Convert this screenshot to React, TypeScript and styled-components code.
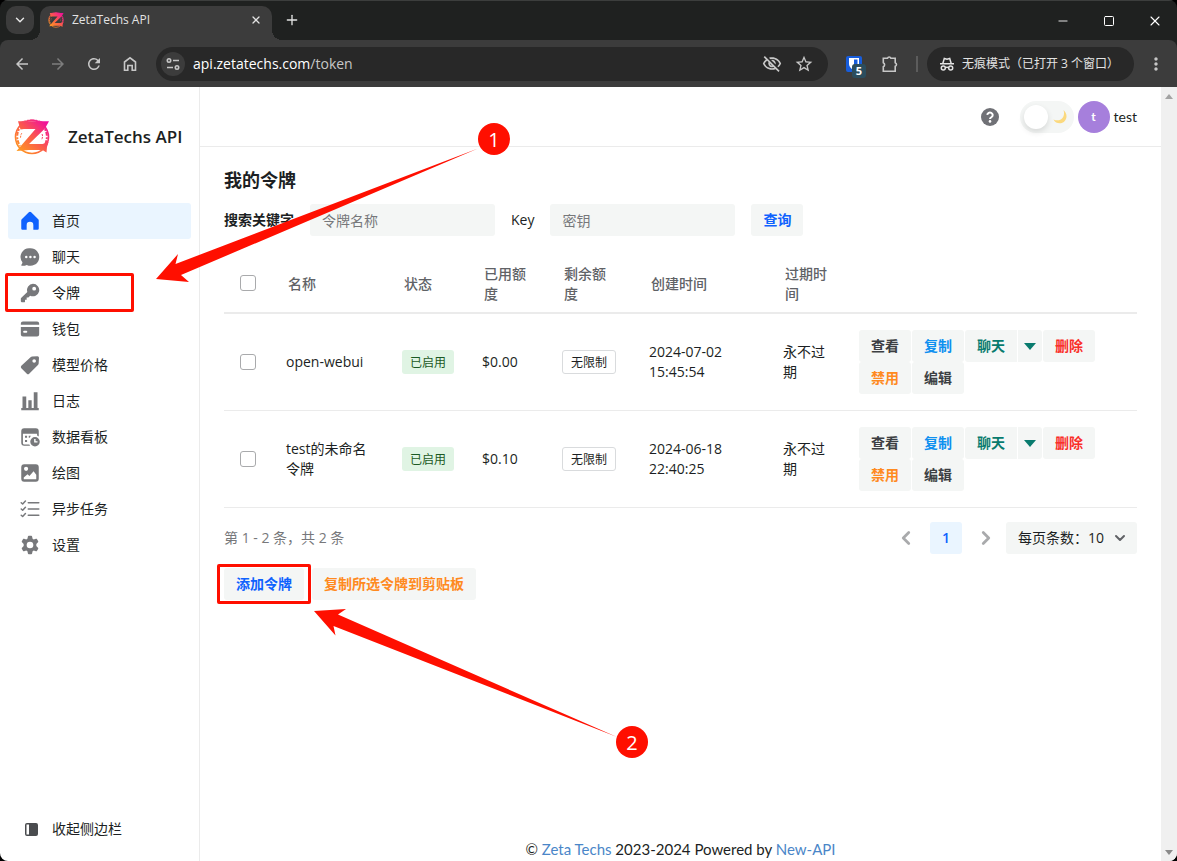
import React from "react";
import styled, { createGlobalStyle } from "styled-components";
import {
  MdArrowBack,
  MdArrowForward,
  MdRefresh,
  MdOutlineVisibilityOff,
  MdStarOutline,
  MdMoreVert,
} from "react-icons/md";
import { ChevronDown, ChevronLeft, ChevronRight, Plus, X, Minus, Square } from "lucide-react";

const GlobalStyle = createGlobalStyle`
  *, *::before, *::after { box-sizing: border-box; }
  html { background: #000; }
  body {
    margin: 0;
    background: #000;
    color: #1c1f23;
    font: 14px/20px "Open Sans", "Noto Sans CJK SC", sans-serif;
  }
  button, input, select { font: inherit; color: inherit; }
  button { border: 0; padding: 0; background: none; cursor: pointer; }
  a { text-decoration: none; color: inherit; }
  svg { display: block; flex: none; }
`;

/* ---------- browser frame ---------- */

const Window = styled.div`
  position: relative;
  display: flex;
  flex-direction: column;
  min-height: 100vh;
  border-radius: 8px;
  overflow: hidden;
  background: #1f2120;
`;

const TitleBar = styled.div`
  display: flex;
  align-items: flex-end;
  height: 40px;
  padding-left: 6px;
  border-top: 1px solid #3c3e3d;
  color: #e3e3e3;
`;

const TabListButton = styled.button`
  display: grid;
  place-items: center;
  width: 28px;
  height: 28px;
  margin: 0 6px 6px 0;
  border-radius: 10px;
  background: #3c3c3c;
`;

const Tab = styled.div`
  position: relative;
  display: flex;
  align-items: center;
  gap: 8px;
  width: 232px;
  height: 34px;
  padding: 0 8px 6px;
  border-radius: 10px 10px 0 0;
  background: #3c3c3c;
  font-size: 12px;
  &::before, &::after {
    content: "";
    position: absolute;
    bottom: 0;
    width: 10px;
    height: 10px;
  }
  &::before { left: -10px; background: radial-gradient(circle at 0 0, transparent 10px, #3c3c3c 10px); }
  &::after { right: -10px; background: radial-gradient(circle at 100% 0, transparent 10px, #3c3c3c 10px); }
`;

const TabTitle = styled.span`
  flex: 1;
`;

const TabClose = styled.button`
  display: grid;
  place-items: center;
  width: 16px;
  height: 16px;
`;

const NewTab = styled.button`
  display: grid;
  place-items: center;
  width: 28px;
  height: 28px;
  margin: 0 0 6px 6px;
`;

const WindowButtons = styled.div`
  display: flex;
  align-self: stretch;
  margin-left: auto;
`;

const WindowButton = styled.button`
  display: grid;
  place-items: center;
  width: 46px;
  color: #fff;
  &:last-child { width: 45px; }
`;

const Toolbar = styled.div`
  display: flex;
  align-items: center;
  height: 47px;
  padding: 0 3px 0 4px;
  border-radius: 8px 8px 0 0;
  background: #3c3c3c;
  color: #c7c7c7;
`;

const ToolButton = styled.button<{ $dim?: boolean }>`
  position: relative;
  display: grid;
  place-items: center;
  width: 36px;
  height: 34px;
  color: ${(p) => (p.$dim ? "#7d7d7d" : "#c7c7c7")};
`;

const AddressBar = styled.div`
  display: flex;
  align-items: center;
  flex: 1;
  height: 34px;
  margin: 0 8px;
  padding: 0 8px 0 5px;
  border-radius: 17px;
  background: #282828;
`;

const SiteInfo = styled.button`
  display: grid;
  place-items: center;
  width: 24px;
  height: 24px;
  margin-right: 8px;
  border-radius: 12px;
  background: #3c3c3c;
`;

const Address = styled.span`
  flex: 1;
  color: #fff;
  span { color: #c7c7c7; }
`;

const AddressButton = styled.button`
  display: grid;
  place-items: center;
  width: 32px;
  height: 32px;
`;

const ExtensionBadge = styled.span`
  position: absolute;
  right: 6px;
  bottom: 3px;
  width: 14px;
  height: 14px;
  border-radius: 3px;
  background: #2b4d5e;
  color: #fff;
  font-size: 11px;
  font-weight: 700;
  line-height: 14px;
  text-align: center;
`;

const Separator = styled.span`
  width: 2px;
  height: 16px;
  margin: 0 9px 0 8px;
  background: #5c5c5c;
`;

const Incognito = styled.button`
  display: flex;
  align-items: center;
  gap: 7px;
  height: 34px;
  margin-right: 4px;
  padding: 0 15px 0 12px;
  border-radius: 17px;
  background: #282828;
  color: #e3e3e3;
  font-size: 12px;
`;

/* ---------- page ---------- */

const Page = styled.div`
  display: flex;
  flex: 1;
  background: #fff;
`;

const Sidebar = styled.aside`
  display: flex;
  flex-direction: column;
  width: 200px;
  padding: 0 8px 14px;
  border-right: 1px solid #ebebeb;
`;

const Brand = styled.a`
  display: flex;
  align-items: center;
  gap: 18px;
  height: 100px;
  margin-bottom: 16px;
  padding-left: 6px;
  font-size: 17px;
  line-height: 24px;
  font-weight: 600;
`;

const NavItem = styled.a<{ $active?: boolean; $bottom?: boolean }>`
  position: relative;
  display: flex;
  align-items: center;
  gap: 12px;
  height: 36px;
  padding-left: 12px;
  border-radius: 3px;
  background: ${(p) => (p.$active ? "#eaf5ff" : "transparent")};
  margin-top: ${(p) => (p.$bottom ? "auto" : "0")};
  color: #1c1f23;
  svg { color: ${(p) => (p.$active ? "#0f62fe" : p.$bottom ? "#4a4c4f" : "#77787b")}; }
`;

const Highlight = styled.span<{ $shape: "nav" | "button" }>`
  position: absolute;
  ${(p) => (p.$shape === "nav" ? "inset: -2px 57px -1px -3px;" : "inset: -4px -7px;")}
  border: 3px solid #ff0f00;
  border-radius: 2px;
  pointer-events: none;
`;

const Main = styled.main`
  display: flex;
  flex: 1;
  flex-direction: column;
  min-width: 0;
`;

const Header = styled.header`
  display: flex;
  align-items: center;
  justify-content: flex-end;
  height: 60px;
  padding-right: 24px;
  border-bottom: 1px solid #ebebeb;
`;

const HelpButton = styled.button`
  margin-right: 20px;
  color: #707176;
`;

const ThemeSwitch = styled.label`
  position: relative;
  display: flex;
  align-items: center;
  width: 54px;
  height: 32px;
  margin-right: 4px;
  border-radius: 16px;
  background: #f4f6f5;
  input {
    appearance: none;
    width: 24px;
    height: 24px;
    margin: 0 0 0 4px;
    border-radius: 12px;
    background: #fff;
    box-shadow: 0 3px 6px rgba(0, 0, 0, 0.12);
  }
  svg { margin-left: 4px; }
`;

const Avatar = styled.span`
  width: 32px;
  height: 32px;
  margin-right: 4px;
  border-radius: 16px;
  background: #a67fdc;
  color: #fff;
  font: 700 12px/32px Lato, sans-serif;
  text-align: center;
`;

const UserName = styled.span`
  font: 14px/20px Lato, sans-serif;
`;

const Content = styled.div`
  flex: 1;
  padding: 21px 24px 0;
`;

const Title = styled.h3`
  margin: 0 0 12px;
  font-size: 18px;
  line-height: 24px;
  font-weight: 700;
`;

const SearchForm = styled.form`
  display: flex;
  align-items: center;
  gap: 16px;
`;

const FieldLabel = styled.label<{ $latin?: boolean }>`
  font-weight: ${(p) => (p.$latin ? 500 : 600)};
`;

const TextInput = styled.input`
  width: 185px;
  height: 32px;
  padding: 0 12px;
  border: 0;
  border-radius: 3px;
  background: #f4f6f5;
  &::placeholder { color: #77787b; opacity: 1; }
`;

const Button = styled.button<{ $color: string; $narrow?: boolean }>`
  position: relative;
  display: inline-flex;
  align-items: center;
  justify-content: center;
  height: 32px;
  padding: 0 ${(p) => (p.$narrow ? "6px" : "12px")};
  border-radius: 3px;
  background: #f4f6f5;
  color: ${(p) => p.$color};
  font-weight: 600;
  white-space: nowrap;
`;

const Table = styled.table`
  width: 100%;
  margin-top: 18px;
  border-collapse: separate;
  border-spacing: 0;
  table-layout: fixed;
  th {
    padding: 10px 16px 8px 18px;
    border-bottom: 2px solid #ebebeb;
    color: #606266;
    font-weight: 500;
    text-align: left;
  }
  td {
    padding: 16px;
    border-bottom: 1px solid #ebebeb;
  }
  th:first-child, td:first-child { padding: 0 0 0 16px; }
`;

const Col = styled.col<{ $w?: number }>`
  width: ${(p) => (p.$w ? `${p.$w}px` : "auto")};
`;

const Checkbox = styled.input`
  display: block;
  appearance: none;
  width: 16px;
  height: 16px;
  margin: 0;
  border: 1px solid #a9aaac;
  border-radius: 3px;
  background: #fff;
`;

const Tag = styled.span<{ $tone: "green" | "plain" }>`
  display: inline-block;
  height: 24px;
  padding: 0 8px;
  border: solid ${(p) => (p.$tone === "green" ? "#e0f4e4" : "#d9dbdd")};
  border-width: ${(p) => (p.$tone === "green" ? "0" : "1px")};
  border-radius: 3px;
  background: ${(p) => (p.$tone === "green" ? "#e0f4e4" : "#fff")};
  color: ${(p) => (p.$tone === "green" ? "#1b5924" : "#1c1f23")};
  font-size: 12px;
  line-height: ${(p) => (p.$tone === "green" ? "26px" : "24px")};
  white-space: nowrap;
  vertical-align: middle;
`;

const Actions = styled.div`
  display: flex;
  flex-wrap: wrap;
  column-gap: 1px;
`;

const SplitButton = styled.div`
  display: flex;
  gap: 1px;
  button:first-child { border-radius: 3px 0 0 3px; }
  button:last-child { border-radius: 0 3px 3px 0; }
`;

const Pagination = styled.div`
  display: flex;
  align-items: center;
  margin: 14px 0;
  color: #77787b;
`;

const Pager = styled.nav`
  display: flex;
  align-items: center;
  gap: 8px;
  margin-left: auto;
`;

const PageButton = styled.button<{ $current?: boolean }>`
  display: grid;
  place-items: center;
  width: 32px;
  height: 32px;
  border-radius: 3px;
  background: ${(p) => (p.$current ? "#eaf5ff" : "transparent")};
  color: ${(p) => (p.$current ? "#0f62fe" : "#a9aaac")};
  font-weight: 600;
`;

const PageSize = styled.label`
  position: relative;
  margin-left: -4px;
  color: #1c1f23;
  select {
    display: block;
    appearance: none;
    width: 131px;
    height: 32px;
    padding: 0 12px;
    border: 0;
    border-radius: 3px;
    background: #f4f6f5;
  }
  svg {
    position: absolute;
    top: 8px;
    right: 9px;
    color: #606266;
    pointer-events: none;
  }
`;

const BatchActions = styled.div`
  display: flex;
  gap: 8px;
`;

const Footer = styled.footer`
  font: 15px/24px Lato, sans-serif;
  text-align: center;
  a { color: #4a86c8; }
`;

const ScrollTrack = styled.div`
  display: flex;
  flex-direction: column;
  align-items: center;
  justify-content: space-between;
  width: 16px;
  padding: 7px 0 6px;
  background: #f0f0f0;
`;

const ArrowLayer = styled.svg`
  position: absolute;
  top: 0;
  left: 0;
  fill: #ff0f00;
  pointer-events: none;
`;

const StepBadge = styled.span<{ $x: number; $y: number }>`
  position: absolute;
  left: ${(p) => p.$x}px;
  top: ${(p) => p.$y}px;
  width: 32px;
  height: 32px;
  border-radius: 16px;
  background: #ff0f00;
  color: #fff;
  font-size: 20px;
  line-height: 34px;
  text-align: center;
`;

/* ---------- drawings ---------- */

const Logo = ({ size, id }: { size: number; id: string }) => (
  <svg width={size} height={size} viewBox="0 0 36 36" fill="none" aria-hidden="true">
    <defs>
      <linearGradient id={id} x1="4" y1="32" x2="32" y2="3" gradientUnits="userSpaceOnUse">
        <stop offset="0" stopColor="#ff9a1f" />
        <stop offset="0.5" stopColor="#fb5a4b" />
        <stop offset="1" stopColor="#f0109c" />
      </linearGradient>
    </defs>
    <g stroke={`url(#${id})`}>
      <circle cx="18" cy="18" r="16.500" strokeWidth="1.600" />
      <path d="M7 3.500c7-3.500 15-3.500 22 0" strokeWidth="1" strokeDasharray="5 1 2 1" />
      <path d="M5 10c-3 6-2 12 1 17M31 10c3 6 2 11 0 16" strokeWidth="2" strokeDasharray="2 1 4 1.500" />
      <path d="M8 14c-1 1-1.500 3-1.500 5M28 15c1 2 .5 4-.5 6" strokeWidth="1" strokeDasharray="2 1" />
    </g>
    <path
      fill={`url(#${id})`}
      d="M4 2.300h31L31 9.500 15 25h13.500l6-2-1.500 5-.5 5.500-4-2.500H15L2.500 32 21.500 10H10l-3.500.500z"
    />
  </svg>
);

const NavIcon = ({ children }: { children: React.ReactNode }) => (
  <svg width="20" height="20" viewBox="0 0 24 24" fill="currentColor" aria-hidden="true">
    {children}
  </svg>
);

const line = { fill: "none", stroke: "currentColor", strokeLinecap: "round" as const, strokeLinejoin: "round" as const };

const HomeIcon = () => (
  <NavIcon>
    <path d="M10.600 1.600a2 2 0 0 1 2.800 0l8.500 8.300c.4.4.6.8.6 1.400V21a1.500 1.500 0 0 1-1.500 1.500h-5V17a4 4 0 0 0-8 0v5.500H3A1.500 1.500 0 0 1 1.500 21v-9.700c0-.6.200-1 .6-1.400z" />
  </NavIcon>
);
const ChatIcon = () => (
  <NavIcon>
    <path fillRule="evenodd" d="M12.500 1.500a10.500 10.500 0 1 1-4.400 20c-1.700.8-4 1.300-6 1-.6-.1-.8-.8-.4-1.200.9-1 1.200-2 1.200-3A10.500 10.500 0 0 1 12.500 1.500zM7.500 10.500a1.500 1.500 0 1 0 0 3 1.500 1.500 0 0 0 0-3zm5 0a1.500 1.500 0 1 0 0 3 1.500 1.500 0 0 0 0-3zm5 0a1.500 1.500 0 1 0 0 3 1.500 1.500 0 0 0 0-3z" />
  </NavIcon>
);
const KeyIcon = () => (
  <NavIcon>
    <path fillRule="evenodd" d="M15.500 1a7.500 7.500 0 1 1-3.300 14.200L10 17.500H8V20H6v2.500c0 .3-.2.500-.500.500H2a1 1 0 0 1-1-1v-3.200c0-.3.1-.5.3-.7l7.500-7.300A7.500 7.500 0 0 1 15.500 1zM17 4.500a2.300 2.300 0 1 0 0 4.600 2.300 2.300 0 0 0 0-4.600z" />
  </NavIcon>
);
const CardIcon = () => (
  <NavIcon>
    <path d="M3.500 3h17A2.500 2.500 0 0 1 23 5.500V7H1V5.500A2.500 2.500 0 0 1 3.500 3z" />
    <path fillRule="evenodd" d="M1 9.500h22v9a2.500 2.500 0 0 1-2.500 2.500h-17A2.500 2.500 0 0 1 1 18.500zM5 14a1 1 0 0 0 0 2.500h2.500a1 1 0 0 0 0-2.500z" />
  </NavIcon>
);
const TagIcon = () => (
  <NavIcon>
    <path fillRule="evenodd" d="M13 2.500c.4-.4.900-.6 1.500-.700L21 1.500A1.800 1.800 0 0 1 22.800 3.300l-.4 7c0 .5-.3 1-.6 1.400L11 22.400a2 2 0 0 1-2.800 0L1.600 15.800a2 2 0 0 1 0-2.800zM17 5a2.200 2.200 0 1 0 0 4.400A2.200 2.200 0 0 0 17 5z" />
  </NavIcon>
);
const ChartIcon = () => (
  <NavIcon>
    <path d="M1.500 20.500h21V23h-21zM3 6.500h4.500v15H3zM10 11h4v10.500h-4zM16.500 1.500H21v20h-4.500z" />
  </NavIcon>
);
const BoardIcon = () => (
  <NavIcon>
    <path fillRule="evenodd" d="M5 1.500h14A3.500 3.500 0 0 1 22.500 5v6.500a7 7 0 0 0-2-1.200V8h-17v11.500c0 .8.700 1.500 1.500 1.500h6.200c.3.600.7 1.100 1.100 1.500H5A3.500 3.500 0 0 1 1.500 19V5A3.500 3.500 0 0 1 5 1.500z" />
    <path d="M6 10.500h2.500V13H6zM10.500 10.500H13l-1.300 2.500h-1.200zM6 15.500h2.500V18H6z" />
    <path fillRule="evenodd" d="M18 12a5.700 5.700 0 1 1 0 11.400A5.700 5.700 0 0 1 18 12zm-1 2.500v4h4V17h-2.300v-2.500z" />
  </NavIcon>
);
const ImageIcon = () => (
  <NavIcon>
    <path fillRule="evenodd" d="M5 1.500h14A3.500 3.500 0 0 1 22.500 5v14a3.500 3.500 0 0 1-3.500 3.500H5A3.500 3.500 0 0 1 1.500 19V5A3.500 3.500 0 0 1 5 1.500zM7.300 4.500a2.500 2.500 0 1 0 0 5 2.500 2.500 0 0 0 0-5zM4.500 19.500h15v-5.300l-3.200-4.200-5 5.500-2.300-2-4.500 4z" />
  </NavIcon>
);
const ListIcon = () => (
  <NavIcon>
    <path {...line} strokeWidth="1.800" d="M1.500 4.500 3.200 6 6.500 2.500M1.500 12l1.700 1.500L6.500 10M1.500 19.500 3.200 21l3.300-3.500" />
    <path {...line} strokeWidth="2" d="M10 4.500h12.500M10 12h12.500M10 19.500h12.500" />
  </NavIcon>
);
const GearIcon = () => (
  <NavIcon>
    <path fillRule="evenodd" d="M9.500 1.800C9.600 1.300 10 1 10.500 1h3c.5 0 .9.300 1 .8l.6 2.700 1.400.8 2.600-.9c.5-.1 1 .1 1.200.5l1.500 2.600c.3.500.2 1-.2 1.300L19.600 10.700v2.600l2 1.900c.4.300.5.800.2 1.300l-1.500 2.600c-.2.400-.7.600-1.200.5l-2.600-.9-1.400.8-.6 2.700c-.1.500-.5.800-1 .8h-3c-.5 0-.9-.3-1-.8l-.6-2.700-1.400-.8-2.600.9c-.5.100-1-.1-1.200-.5l-1.500-2.600c-.3-.5-.2-1 .2-1.300l2-1.900v-2.600l-2-1.900c-.4-.3-.5-.8-.2-1.300l1.500-2.600c.2-.4.700-.6 1.200-.5l2.600.9 1.400-.8zM12 8a4 4 0 1 0 0 8 4 4 0 0 0 0-8z" />
  </NavIcon>
);
const CollapseIcon = () => (
  <svg width="20" height="20" viewBox="0 0 20 20" fill="currentColor" aria-hidden="true">
    <path fillRule="evenodd" d="M7 4h9a2 2 0 0 1 2 2v9a2 2 0 0 1-2 2H7a2 2 0 0 1-2-2V6a2 2 0 0 1 2-2zm-.500 1.500v10H9v-10z" />
  </svg>
);

const navItems = [
  { label: "首页", icon: <HomeIcon />, active: true },
  { label: "聊天", icon: <ChatIcon /> },
  { label: "令牌", icon: <KeyIcon />, marked: true },
  { label: "钱包", icon: <CardIcon /> },
  { label: "模型价格", icon: <TagIcon /> },
  { label: "日志", icon: <ChartIcon /> },
  { label: "数据看板", icon: <BoardIcon /> },
  { label: "绘图", icon: <ImageIcon /> },
  { label: "异步任务", icon: <ListIcon /> },
  { label: "设置", icon: <GearIcon /> },
];

const tokens = [
  { name: "open-webui", used: "$0.00", created: "2024-07-02 15:45:54" },
  { name: "test的未命名令牌", used: "$0.10", created: "2024-06-18 22:40:25" },
];

const BrowserFrame = () => (
  <>
    <TitleBar>
      <TabListButton aria-label="搜索标签页"><ChevronDown size={14} strokeWidth={2.5} /></TabListButton>
      <Tab>
        <Logo size={16} id="favicon" />
        <TabTitle>ZetaTechs API</TabTitle>
        <TabClose aria-label="关闭标签页"><X size={12} strokeWidth={2.5} /></TabClose>
      </Tab>
      <NewTab aria-label="新标签页"><Plus size={16} strokeWidth={2} /></NewTab>
      <WindowButtons>
        <WindowButton aria-label="最小化"><Minus size={14} strokeWidth={1.5} /></WindowButton>
        <WindowButton aria-label="最大化"><Square size={12} strokeWidth={2} /></WindowButton>
        <WindowButton aria-label="关闭"><X size={16} strokeWidth={1.6} /></WindowButton>
      </WindowButtons>
    </TitleBar>
    <Toolbar>
      <ToolButton aria-label="后退"><MdArrowBack size={18} /></ToolButton>
      <ToolButton $dim aria-label="前进"><MdArrowForward size={18} /></ToolButton>
      <ToolButton aria-label="重新加载"><MdRefresh size={18} /></ToolButton>
      <ToolButton aria-label="主页">
        <svg width="18" height="18" viewBox="0 0 18 18" fill="none" stroke="currentColor" strokeWidth="1.600">
          <path d="M3.500 15.200V7L9 2.800 14.500 7v8.200h-3.300v-4.700H6.800v4.700z" />
        </svg>
      </ToolButton>
      <AddressBar>
        <SiteInfo aria-label="网站信息">
          <svg width="14" height="14" viewBox="0 0 14 14" fill="none" stroke="currentColor" strokeWidth="1.600">
            <circle cx="3" cy="3.500" r="1.700" />
            <path d="M7 3.500h6M1 10.500h6" />
            <circle cx="11" cy="10.500" r="1.700" />
          </svg>
        </SiteInfo>
        <Address>api.zetatechs.com<span>/token</span></Address>
        <AddressButton aria-label="第三方 Cookie 已阻止"><MdOutlineVisibilityOff size={20} /></AddressButton>
        <AddressButton aria-label="添加书签"><MdStarOutline size={20} /></AddressButton>
      </AddressBar>
      <ToolButton aria-label="Bitwarden">
        <svg width="16" height="16" viewBox="0 0 16 16">
          <rect width="16" height="16" rx="2" fill="#175ddc" />
          <path d="M3 2h10v6c0 3-2.500 5-5 6.200C5.500 13 3 11 3 8z" fill="#fff" />
          <path d="M8 3.500h3.500V8c0 2-1.500 3.300-3.500 4.500z" fill="#175ddc" />
        </svg>
        <ExtensionBadge>5</ExtensionBadge>
      </ToolButton>
      <ToolButton aria-label="扩展程序">
        <svg width="20" height="20" viewBox="0 0 20 20" fill="none" stroke="currentColor" strokeWidth="1.600">
          <path d="M3.300 4.200h4.200a1.800 1.800 0 0 1 3.400 0h4.300v4.500a1.900 1.900 0 0 1 0 3.600v4.900H3.300v-4.500a2.200 2.200 0 0 0 0-4z" />
        </svg>
      </ToolButton>
      <Separator />
      <Incognito>
        <svg width="16" height="16" viewBox="0 0 16 16" fill="none" stroke="currentColor" strokeWidth="1.500">
          <path d="M1 7.800h14M3.800 7.500l1.500-5 2.700.8 2.700-.8 1.500 5" />
          <circle cx="4.300" cy="12" r="2" />
          <circle cx="11.700" cy="12" r="2" />
          <path d="M6.300 11.600q1.700-.8 3.400 0" />
        </svg>
        {"无痕模式\uFF08已打开 3 个窗口\uFF09"}
      </Incognito>
      <ToolButton aria-label="菜单"><MdMoreVert size={20} /></ToolButton>
    </Toolbar>
  </>
);

const TokenActions = () => (
  <Actions>
    <Button $color="#3c3f43">查看</Button>
    <Button $color="#0f90f0">复制</Button>
    <SplitButton>
      <Button $color="#087b6e">聊天</Button>
      <Button $color="#087b6e" $narrow aria-label="更多聊天应用">
        <svg width="12" height="7" viewBox="0 0 12 7" fill="currentColor"><path d="M0 0h12L6 7z" /></svg>
      </Button>
    </SplitButton>
    <Button $color="#fa2f2a">删除</Button>
    <Button $color="#ff8a1f">禁用</Button>
    <Button $color="#3c3f43">编辑</Button>
  </Actions>
);

export default function App() {
  return (
    <>
      <GlobalStyle />
      <Window>
        <BrowserFrame />
        <Page>
          <Sidebar>
            <Brand href="#">
              <Logo size={36} id="brand" />
              ZetaTechs API
            </Brand>
            {navItems.map((item) => (
              <NavItem key={item.label} href="#" $active={item.active}>
                {item.icon}
                {item.label}
                {item.marked && <Highlight $shape="nav" />}
              </NavItem>
            ))}
            <NavItem as="button" $bottom>
              <CollapseIcon />
              收起侧边栏
            </NavItem>
          </Sidebar>
          <Main>
            <Header>
              <HelpButton aria-label="帮助">
                <svg width="20" height="20" viewBox="0 0 20 20">
                  <circle cx="10" cy="10" r="9" fill="currentColor" />
                  <path d="M7.300 7.900a2.700 2.500 0 1 1 4.300 2.100c-1 .7-1.600 1-1.600 2" fill="none" stroke="#fff" strokeWidth="2" />
                  <circle cx="10" cy="14.400" r="1.300" fill="#fff" />
                </svg>
              </HelpButton>
              <ThemeSwitch>
                <input type="checkbox" role="switch" aria-label="深色模式" />
                <svg width="16" height="16" viewBox="0 0 16 16">
                  <path d="M11.500 1c4 3.500 4 9 .3 12C8.500 15.500 3.500 14.500 1.500 10.500c3.500 1.500 7 1 9-1.500 1.700-2.200 2-5 1-8z" fill="#fbd97e" />
                </svg>
              </ThemeSwitch>
              <Avatar>t</Avatar>
              <UserName>test</UserName>
            </Header>
            <Content>
              <Title>我的令牌</Title>
              <SearchForm onSubmit={(e) => e.preventDefault()}>
                <FieldLabel htmlFor="keyword">搜索关键字</FieldLabel>
                <TextInput id="keyword" placeholder="令牌名称" />
                <FieldLabel $latin htmlFor="key">Key</FieldLabel>
                <TextInput id="key" placeholder="密钥" />
                <Button type="submit" $color="#0f62fe">查询</Button>
              </SearchForm>
              <Table>
                <colgroup>
                  <Col $w={46} />
                  <Col $w={116} />
                  <Col $w={80} />
                  <Col $w={80} />
                  <Col $w={87} />
                  <Col $w={134} />
                  <Col $w={76} />
                  <Col />
                </colgroup>
                <thead>
                  <tr>
                    <th><Checkbox type="checkbox" aria-label="全选" /></th>
                    <th>名称</th>
                    <th>状态</th>
                    <th>已用额度</th>
                    <th>剩余额度</th>
                    <th>创建时间</th>
                    <th>过期时间</th>
                    <th aria-label="操作" />
                  </tr>
                </thead>
                <tbody>
                  {tokens.map((t) => (
                    <tr key={t.name}>
                      <td><Checkbox type="checkbox" aria-label={t.name} /></td>
                      <td>{t.name}</td>
                      <td><Tag $tone="green">已启用</Tag></td>
                      <td>{t.used}</td>
                      <td><Tag $tone="plain">无限制</Tag></td>
                      <td>{t.created}</td>
                      <td>永不过期</td>
                      <td><TokenActions /></td>
                    </tr>
                  ))}
                </tbody>
              </Table>
              <Pagination>
                <span>{"第 1 - 2 条\uFF0C共 2 条"}</span>
                <Pager aria-label="分页">
                  <PageButton aria-label="上一页"><ChevronLeft size={22} strokeWidth={3} /></PageButton>
                  <PageButton $current>1</PageButton>
                  <PageButton aria-label="下一页"><ChevronRight size={22} strokeWidth={3} /></PageButton>
                  <PageSize>
                    <select aria-label="每页条数" defaultValue="10">
                      <option value="10">{"每页条数\uFF1A10"}</option>
                      <option value="20">{"每页条数\uFF1A20"}</option>
                    </select>
                    <ChevronDown size={16} strokeWidth={3} />
                  </PageSize>
                </Pager>
              </Pagination>
              <BatchActions>
                <Button $color="#0f62fe">
                  添加令牌
                  <Highlight $shape="button" />
                </Button>
                <Button $color="#ff8a1f">复制所选令牌到剪贴板</Button>
              </BatchActions>
            </Content>
            <Footer>
              © <a href="#">Zeta Techs</a> 2023-2024 Powered by <a href="#">New-API</a>
            </Footer>
          </Main>
          <ScrollTrack>
            <svg width="8" height="5" viewBox="0 0 8 5" fill="#a3a3a3"><path d="M0 5 4 0l4 5z" /></svg>
            <svg width="8" height="5" viewBox="0 0 8 5" fill="#8a8a8a"><path d="M0 0h8L4 5z" /></svg>
          </ScrollTrack>
        </Page>
        <ArrowLayer width="700" height="800" viewBox="0 0 700 800" aria-hidden="true">
          <path d="M156 279 178 254 175.500 264 478 148.500 181 275 189 282z" />
          <path d="M314 611 346 609 338 614.500 617 737 333.500 626 335.500 635.500z" />
        </ArrowLayer>
        <StepBadge $x={478} $y={123}>1</StepBadge>
        <StepBadge $x={616} $y={726}>2</StepBadge>
      </Window>
    </>
  );
}
